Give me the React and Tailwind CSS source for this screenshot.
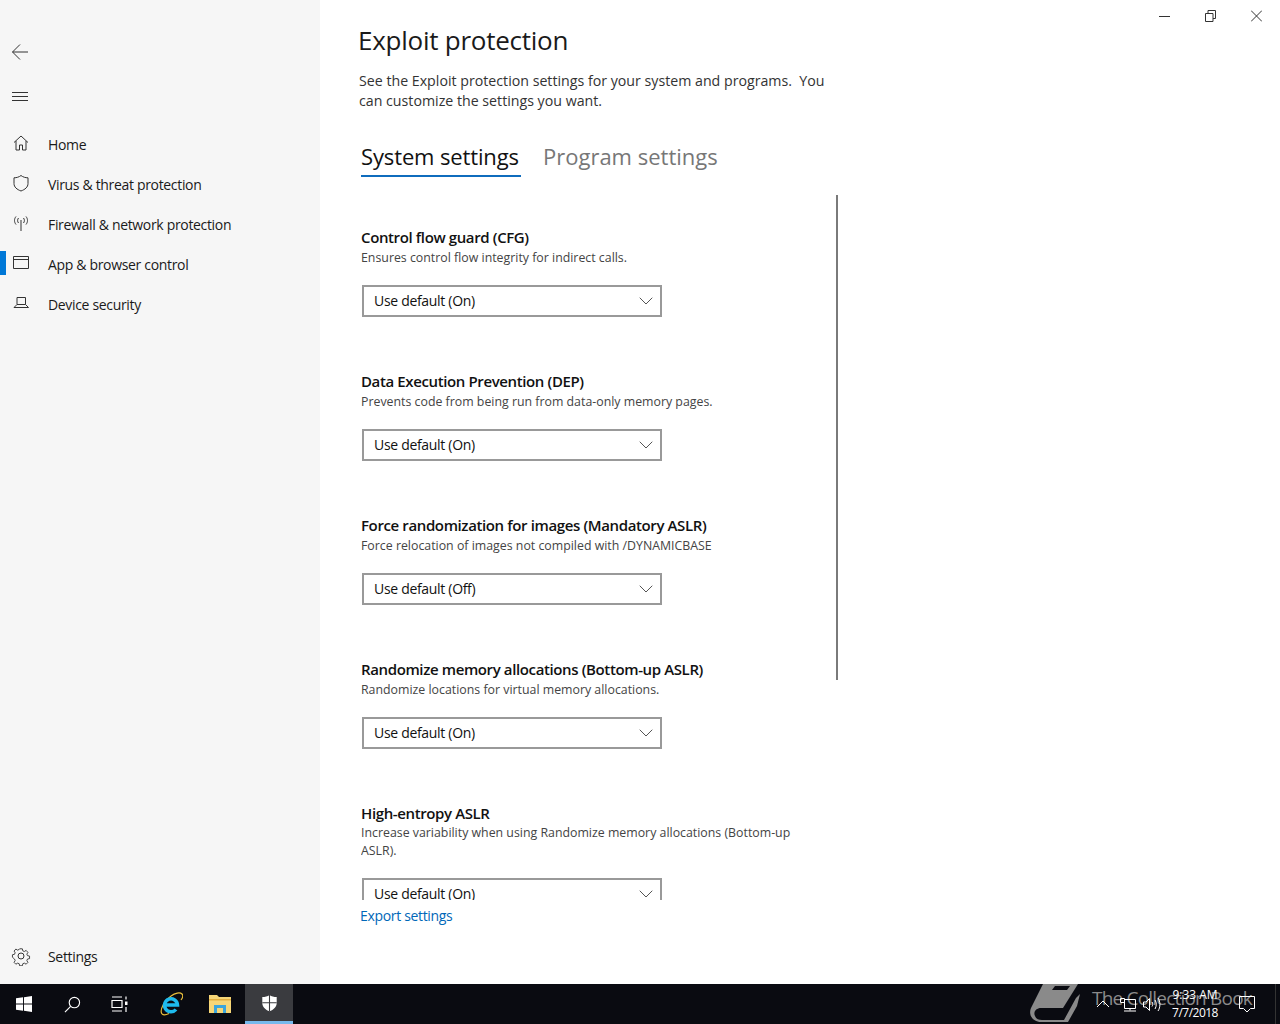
import React from 'react';
import { ChevronDown } from 'lucide-react';

const FONT = '"Open Sans", "Noto Sans", sans-serif';

const navItems = [
  { label: 'Home', icon: 'home' },
  { label: 'Virus & threat protection', icon: 'shield' },
  { label: 'Firewall & network protection', icon: 'antenna' },
  { label: 'App & browser control', icon: 'window', active: true },
  { label: 'Device security', icon: 'laptop' },
];

const settings = [
  { title: 'Control flow guard (CFG)', desc: 'Ensures control flow integrity for indirect calls.', value: 'Use default (On)' },
  { title: 'Data Execution Prevention (DEP)', desc: 'Prevents code from being run from data-only memory pages.', value: 'Use default (On)' },
  { title: 'Force randomization for images (Mandatory ASLR)', desc: 'Force relocation of images not compiled with /DYNAMICBASE', value: 'Use default (Off)' },
  { title: 'Randomize memory allocations (Bottom-up ASLR)', desc: 'Randomize locations for virtual memory allocations.', value: 'Use default (On)' },
  { title: 'High-entropy ASLR', desc: 'Increase variability when using Randomize memory allocations (Bottom-up ASLR).', value: 'Use default (On)' },
];

const NavIcon = ({ name }) => {
  const common = { width: 20, height: 20, viewBox: '0 0 20 20', fill: 'none', stroke: '#333', strokeWidth: 1, className: '-translate-y-[1px]' };
  if (name === 'home')
    return (
      <svg {...common}>
        <path d="M3 9.500 10 3l7 6.500M5 8v9h3.500v-5h3v5H15V8" />
      </svg>
    );
  if (name === 'shield')
    return (
      <svg {...common}>
        <path d="M10 2.500c2 1.600 4.500 2.300 7 2.300v5.700c0 3.700-3 6-7 7.500-4-1.500-7-3.800-7-7.500V4.800c2.500 0 5-.7 7-2.300Z" />
      </svg>
    );
  if (name === 'antenna')
    return (
      <svg {...common}>
        <path d="M10 7v11" />
        <path d="M7.500 5c-1.200 1.500-1.200 3.500 0 5M12.500 5c1.200 1.500 1.200 3.500 0 5M5 3.500c-2 2.500-2 5.500 0 8M15 3.500c2 2.500 2 5.500 0 8" />
      </svg>
    );
  if (name === 'window')
    return (
      <svg {...common}>
        <path d="M2.500 3.500h15v12h-15zM2.500 6.500h15" />
      </svg>
    );
  return (
    <svg {...common}>
      <path d="M6 4.500h8.500v7H6zM3 14.500h14.500M3 14.500l3-3M17.500 14.500l-3-3" />
    </svg>
  );
};

const SettingBlock = ({ title, desc, value }) => (
  <div className="group mb-[54px]">
    <h3 className="text-[15px] leading-[20px] font-semibold text-[#111] tracking-[-0.38px]">{title}</h3>
    <p className="mt-[2px] group-last:mt-[1px] text-[12.35px] leading-[18px] text-[#444] w-[440px] mb-[18px]">{desc}</p>
    <div className="w-[300px] h-[32px] ml-[1px] border-2 border-[#999] bg-white flex items-center justify-between pl-[10px] pr-[2px]">
      <span className="mb-[2px] text-[14px] text-[#111] tracking-[-0.31px]">{value}</span>
      <ChevronDown className="w-[24px] h-[24px] text-[#555]" strokeWidth={1} />
    </div>
  </div>
);

const Taskbar = () => (
  <div className="relative h-[40px] bg-[#0a0b11] flex items-center shrink-0 overflow-hidden">
    <div className="w-[48px] h-full flex items-center justify-center">
      <svg width="16" height="16" viewBox="0 0 17 17" fill="#fff">
        <path d="M0 2.500 7.500 1.400v6.700H0zM8.500 1.300 17 0v8.100H8.500zM0 9h7.500v6.700L0 14.600zM8.500 9H17v8l-8.500-1.200z" />
      </svg>
    </div>
    <div className="w-[48px] h-full flex items-center justify-center">
      <svg width="17" height="17" viewBox="0 0 18 18" fill="none" stroke="#fff" strokeWidth="1.200">
        <circle cx="11" cy="7" r="5.500" />
        <path d="M7 11 1 17" />
      </svg>
    </div>
    <div className="w-[48px] h-full flex items-center justify-center pr-[1px]">
      <svg width="17" height="16" viewBox="0 0 17 16" fill="none" stroke="#fff" strokeWidth="1.200">
        <path d="M1 4.500h10v7H1zM1 1h10M1 15h10M15 .5v3M15 11v5" />
        <path d="M14 5.500h2.500V9H14z" fill="#fff" stroke="none" />
      </svg>
    </div>
    <div className="w-[48px] ml-[3px] h-full flex items-center justify-center">
      <svg width="24" height="25" viewBox="0 0 24 25" fill="none">
        <path d="M3 22C0 18 6 8 12 4c4-3 9-4 11-2 1.500 1.500.5 4-1 6" stroke="#e9bf3c" strokeWidth="1.200" />
        <path d="M3 22c2 1.500 5 .5 7-.5" stroke="#e9bf3c" strokeWidth="1.200" />
        <path d="M6.500 13h12a6.500 6.500 0 1 0-1.500 4.500" stroke="#1ebbee" strokeWidth="3.500" />
      </svg>
    </div>
    <div className="w-[48px] ml-[1px] h-full flex items-center justify-center">
      <svg width="22" height="18" viewBox="0 0 22 18">
        <path d="M0 0h8l2 2h12v16H0z" fill="#f6d677" />
        <path d="M0 4h22v1.500H0z" fill="#e3ae3e" />
        <path d="M5 10h12v8h-3v-5H8v5H5z" fill="#3aa5dc" />
      </svg>
    </div>
    <div className="w-[48px] ml-[1px] h-full bg-[#3a3b3f] border-b-[3px] border-[#76b9ed] flex items-center justify-center">
      <svg width="17" height="18" viewBox="0 0 18 20">
        <path d="M9 1c2 1.500 5 2.400 8 2.400V10c0 4.500-3.500 7.500-8 9.300C4.500 17.500 1 14.500 1 10V3.400c3 0 6-.9 8-2.400Z" fill="#fff" />
        <path d="M8.400 1h1.200v18.500H8.400zM1 9.200h16v1.200H1z" fill="#3a3b3f" />
      </svg>
    </div>

    {/* watermark sits on top of the tray */}
    <div className="absolute left-[1030px] top-0 h-full flex items-start text-[#8a8a8a]">
      <svg width="50" height="38" viewBox="0 0 50 38">
        <path d="M13 0H48L33 24H11C6 24 3 28 5 32C6 35 9 36 12 36H34L46 14 50 10 47 22 38 38H11C3 38-2 31 1 24Z" fill="#8a8a8a" />
        <path d="M25 2H40L37 6H22Z" fill="#0a0b11" />
      </svg>
      <span className="ml-[12px] mt-[2px] text-[19px] leading-[24px] tracking-[-0.8px] whitespace-nowrap">The Collection Book</span>
    </div>

    <div className="absolute left-[1100px] top-0 h-full w-[180px] text-white">
      <svg className="absolute left-[-3px] top-[12px]" width="160" height="18" viewBox="0 0 160 18" fill="none" stroke="#fff" strokeWidth="1">
        <path d="M0 11 6 5l6 6" />
        <path d="M27.500 3.500h11v9h-11zM33 12.500v2M27 15h12M23.500 2.500h4v4h-4z" />
        <path d="M46.500 6h2.500l3.500-3.500v12L49 11h-2.500zM55 6c1 1.500 1 3 0 4.500M58 4c1.700 2.500 1.700 6 0 9M61 2c2.500 3.500 2.500 9.500 0 13" />
        <path d="M142.500 .5h15v12h-4l-3.500 3.500-3.500-3.500h-4z" />
      </svg>
      <div className="absolute left-[55px] top-[2px] w-[80px] text-center text-[12px] leading-[18px] whitespace-nowrap">
        <div>9:33 AM</div>
        <div className="tracking-[-0.5px]">7/7/2018</div>
      </div>
      <span className="absolute left-[175px] top-0 w-[1px] h-full bg-[#333]" />
    </div>
  </div>
);

export default function App() {
  return (
    <div className="w-[1280px] h-[1024px] flex flex-col bg-white overflow-hidden" style={{ fontFamily: FONT }}>
      <div className="flex flex-1 min-h-0">
        {/* Sidebar */}
        <aside className="w-[320px] bg-[#f6f6f6] flex flex-col shrink-0">
          <div className="h-[104px] pl-[12px] pt-[44px] flex flex-col gap-[32px]">
            <svg width="16" height="16" viewBox="0 0 16 16" fill="none" stroke="#333" strokeWidth="1">
              <path d="M8 .5.500 8 8 15.500M.500 8H16" />
            </svg>
            <svg width="16" height="10" viewBox="0 0 16 10" fill="none" stroke="#333" strokeWidth="1">
              <path d="M0 .5h16M0 4.500h16M0 8.500h16" />
            </svg>
          </div>
          <nav className="pt-[20px]">
            {navItems.map((item) => (
              <div key={item.label} className="relative h-[40px] flex items-center pl-[11px]">
                {item.active && <span className="absolute left-0 top-[7px] w-[6px] h-[24px] bg-[#0078d7]" />}
                <NavIcon name={item.icon} />
                <span className="ml-[17px] text-[14px] text-[#1a1a1a] tracking-[-0.33px]">{item.label}</span>
              </div>
            ))}
          </nav>
          <div className="mt-auto h-[56px] flex items-center pl-[11px]">
            <svg width="20" height="20" viewBox="0 0 20 20" fill="none" stroke="#333" strokeWidth="1">
              <circle cx="10" cy="10" r="3" />
              <path d="M8.500 2h3l.5 2.300 1.700.7 2-1.200 2 2.200-1.200 1.900.7 1.700 2.300.5v2.800l-2.300.5-.7 1.700 1.200 2-2 2-2-1.200-1.700.7-.5 2.300h-3l-.5-2.300-1.700-.7-2 1.200-2-2 1.200-2-.7-1.700L.500 11.400V8.600l2.300-.5.700-1.700-1.200-1.900 2-2.200 2 1.200L8 2.700Z" transform="translate(1 1) scale(.9)" />
            </svg>
            <span className="ml-[17px] text-[14px] text-[#1a1a1a] tracking-[-0.33px]">Settings</span>
          </div>
        </aside>

        {/* Main */}
        <main className="relative flex-1 pl-[38px] pt-[21px]">
          <div className="absolute top-[7px] right-[18px] flex items-center gap-[35px]">
            <svg width="11" height="18" viewBox="0 0 11 18" stroke="#333" strokeWidth="1" fill="none"><path d="M0 9.500h11" /></svg>
            <svg width="11" height="18" viewBox="0 0 11 18" stroke="#333" strokeWidth="1" fill="none"><path d="M.5 6.500h7.500v8H.500zM3 6.500V3.500h7.500v8H8" /></svg>
            <svg width="11" height="18" viewBox="0 0 11 18" stroke="#333" strokeWidth="1" fill="none"><path d="m0 3.500 11 11M11 3.500l-11 11" /></svg>
          </div>

          <h1 className="text-[26px] leading-[38px] text-[#1a1a1a] tracking-[-0.25px]">Exploit protection</h1>
          <p className="ml-[1px] mt-[12px] w-[480px] text-[14.2px] leading-[20px] text-[#333]">
            See the Exploit protection settings for your system and programs.&nbsp; You can customize the settings you want.
          </p>

          <div className="flex gap-[22px] ml-[3px] mt-[26px]">
            <div className="w-[160px] border-b-2 border-[#0f6cbd] h-[40px]">
              <span className="text-[22px] leading-[38px] text-[#111] tracking-[-0.13px]">System settings</span>
            </div>
            <span className="text-[22px] leading-[38px] text-[#777]">Program settings</span>
          </div>

          <div className="relative w-[480px] h-[705px] mt-[18px] ml-[3px] pt-[32px] overflow-hidden">
            <span className="absolute right-[3px] top-0 w-[2px] h-[485px] bg-[#7a7a7a]" />
            {settings.map((s) => (
              <SettingBlock key={s.title} {...s} />
            ))}
          </div>
          <a className="block ml-[2px] mt-[6px] text-[14px] leading-[20px] text-[#0067b8] tracking-[-0.33px]">Export settings</a>
        </main>
      </div>
      <Taskbar />
    </div>
  );
}
